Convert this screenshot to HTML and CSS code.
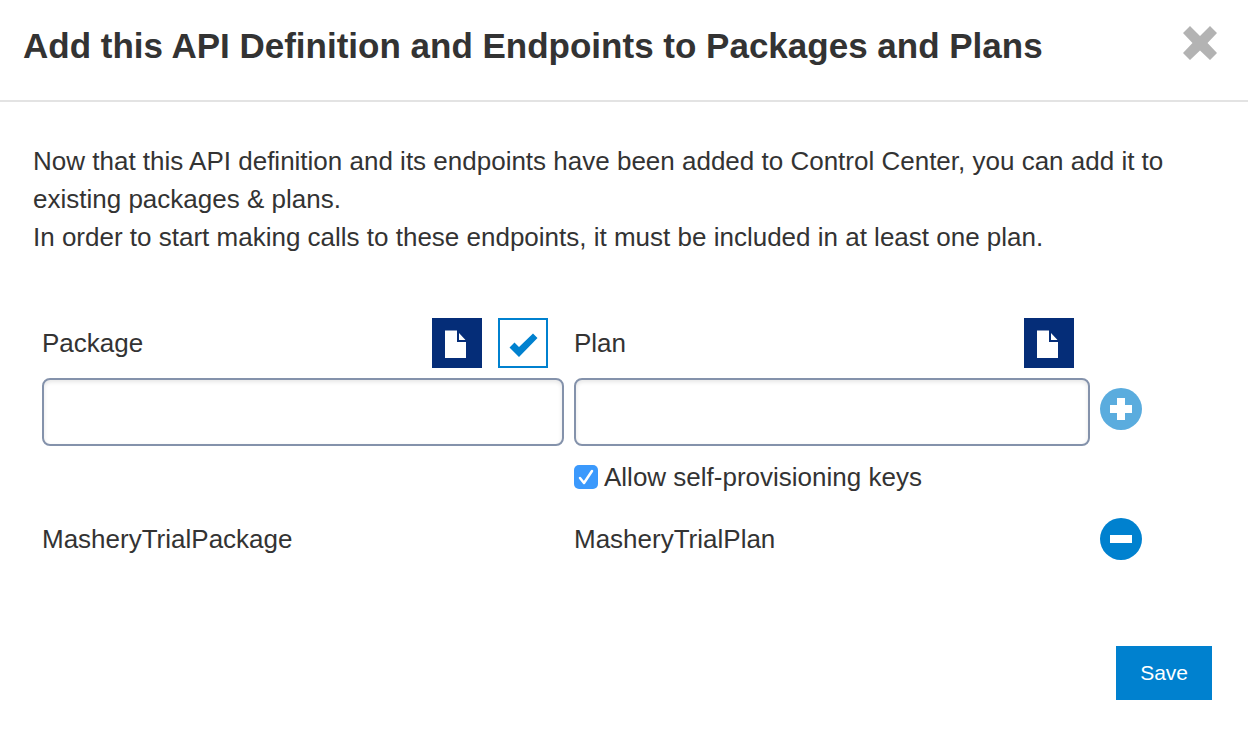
FILE: index.html
```html
<!DOCTYPE html>
<html lang="en">
<head>
    <meta charset="UTF-8">
    <meta name="viewport" content="width=device-width, initial-scale=1.0">
    <title>Add to Packages and Plans</title>
    <link rel="stylesheet" href="styles.css">
</head>
<body>
    <div class="modal">
        <header class="modal-header">
            <h1>Add this API Definition and Endpoints to Packages and Plans</h1>
            <button type="button" class="close" aria-label="Close">
                <svg width="34" height="34" viewBox="0 0 34 34"><path d="M7 0L17 10L27 0L34 7L24.500 17L34 27L27 34L17 24.500L7 34L0 27L9.500 17L0 7Z" fill="#b3b3b3"/></svg>
            </button>
        </header>

        <form class="modal-body">
            <p class="intro">Now that this API definition and its endpoints have been added to Control Center, you can add it to existing packages &amp; plans.<br>
            In order to start making calls to these endpoints, it must be included in at least one plan.</p>

            <div class="plan-grid">
                <div class="field">
                    <div class="field-head">
                        <label for="package">Package</label>
                        <button type="button" class="tool" aria-label="New package">
                            <svg width="50" height="50" viewBox="0 0 50 50"><path d="M13 12.500H25V24H34V40H13ZM27 15L33.500 22H27Z" fill="#fff"/></svg>
                        </button>
                        <button type="button" class="tool tool-outline" aria-label="Use package">
                            <svg width="46" height="46" viewBox="0 0 46 46"><path d="M9.500 27.500L14.500 22.500L19 27L33 13.500L37.500 18L19 37Z" fill="#0081cf"/></svg>
                        </button>
                    </div>
                    <input type="text" id="package" class="text-box">
                </div>

                <div class="field">
                    <div class="field-head">
                        <label for="plan">Plan</label>
                        <button type="button" class="tool" aria-label="New plan">
                            <svg width="50" height="50" viewBox="0 0 50 50"><path d="M13 12.500H25V24H34V40H13ZM27 15L33.500 22H27Z" fill="#fff"/></svg>
                        </button>
                    </div>
                    <input type="text" id="plan" class="text-box">
                </div>

                <button type="button" class="round add" aria-label="Add plan">
                    <svg width="42" height="42" viewBox="0 0 42 42"><circle cx="21" cy="21" r="21" fill="#5aacde"/><path d="M17 10H25V17H32V25H25V32H17V25H10V17H17Z" fill="#fff"/></svg>
                </button>

                <div class="allow">
                    <input type="checkbox" id="allow-keys" checked>
                    <label for="allow-keys">Allow self-provisioning keys</label>
                </div>

                <span class="package-name">MasheryTrialPackage</span>
                <span>MasheryTrialPlan</span>
                <button type="button" class="round" aria-label="Remove plan">
                    <svg width="42" height="42" viewBox="0 0 42 42"><circle cx="21" cy="21" r="21" fill="#0081cf"/><path d="M10 17H32V25H10Z" fill="#fff"/></svg>
                </button>
            </div>

            <div class="actions">
                <button type="submit" class="save">Save</button>
            </div>
        </form>
    </div>
</body>
</html>
```

FILE: styles.css
```css
* {
    box-sizing: border-box;
}
body {
    margin: 0;
    background-color: #fff;
    color: #333;
    font-family: "Liberation Sans", Arial, sans-serif;
    font-size: 26px;
    line-height: 38px;
}
button {
    padding: 0;
    border: none;
    background: none;
    font-family: inherit;
    cursor: pointer;
}
svg {
    display: block;
}
.modal-header {
    display: flex;
    justify-content: space-between;
    align-items: flex-start;
    padding: 26px 31px 34px 23px;
    border-bottom: 2px solid #e3e3e3;
}
h1 {
    margin: 0;
    font-size: 35px;
    line-height: 40px;
}
.modal-body {
    padding: 40px 36px 30px 33px;
}
.intro {
    margin: 0 0 62px;
}
.plan-grid {
    display: grid;
    grid-template-columns: 522fr 516fr 42px;
    column-gap: 10px;
    align-items: center;
    padding: 0 70px 0 9px;
}
.field-head {
    display: flex;
    align-items: center;
    gap: 16px;
    padding-right: 16px;
    margin-bottom: 10px;
}
.field-head label {
    flex: 1;
}
.tool {
    width: 50px;
    height: 50px;
    background-color: #052d78;
}
.tool-outline {
    border: 2px solid #0081cf;
    background-color: #fff;
}
.text-box {
    display: block;
    width: 100%;
    height: 68px;
    padding: 0 14px;
    border: 2px solid #8492ab;
    border-radius: 8px;
    box-shadow: inset 0 2px 4px rgba(0, 0, 0, 0.1);
    font: inherit;
    color: inherit;
}
.round {
    width: 42px;
    height: 42px;
}
.add {
    align-self: end;
    margin-bottom: 16px;
}
.allow {
    grid-column: 2 / 4;
    display: flex;
    align-items: center;
    gap: 6px;
    margin: 12px 0 22px;
}
.allow input {
    appearance: none;
    width: 24px;
    height: 24px;
    margin: 0;
    border-radius: 5px;
    /* white tick on the blue box */
    background: #3b99fc url('data:image/svg+xml,<svg xmlns="http://www.w3.org/2000/svg" viewBox="0 0 24 24"><path d="M6 13L10 18L18 6" fill="none" stroke="white" stroke-width="2.500" stroke-linecap="round" stroke-linejoin="round"/></svg>') no-repeat;
}
.allow input:not(:checked) {
    background: #fff;
    border: 1px solid #8492ab;
}
.package-name {
    grid-column: 1;
}
.actions {
    display: flex;
    justify-content: flex-end;
    margin-top: 86px;
}
.save {
    padding: 8px 24px;
    background-color: #0081cf;
    color: #fff;
    font-size: 21px;
    line-height: 38px;
}
```
